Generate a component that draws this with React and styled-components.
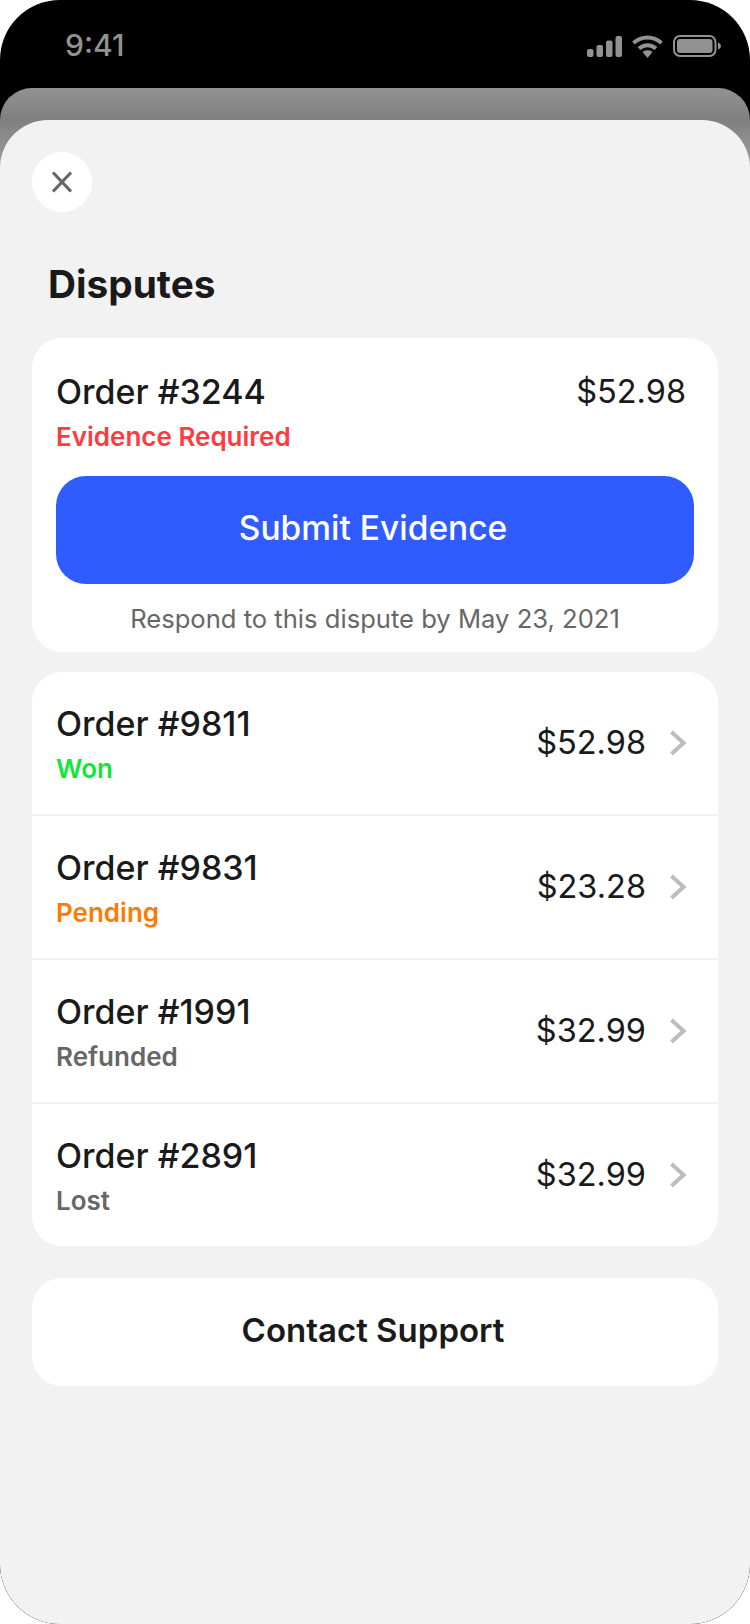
import React from 'react'
import styled, { createGlobalStyle } from 'styled-components'

const GlobalStyle = createGlobalStyle`
    html, body {
        margin: 0;
        padding: 0;
        background: #fff;
    }
    * {
        box-sizing: border-box;
    }
`

const orders = [
    { id: '9811', status: 'Won', color: '#0fe63c', amount: '$52.98' },
    { id: '9831', status: 'Pending', color: '#ff7a00', amount: '$23.28' },
    { id: '1991', status: 'Refunded', color: '#666666', amount: '$32.99' },
    { id: '2891', status: 'Lost', color: '#666666', amount: '$32.99' },
]

function StatusIcons() {
    return (
        <Icons>
            <svg width="35" height="21" viewBox="0 0 35 21" fill="#929292">
                <rect x="0" y="13" width="6.5" height="8" rx="2" />
                <rect x="9.5" y="9" width="6.5" height="12" rx="2" />
                <rect x="19" y="4.5" width="6.5" height="16.5" rx="2" />
                <rect x="28.5" y="0" width="6.5" height="21" rx="2" />
            </svg>
            <svg width="31" height="23" viewBox="0 0 31 23" fill="none" stroke="#929292" strokeWidth="4">
                <path d="M1.5 8C9.5 0.5 21.5 0.5 29.5 8" />
                <path d="M7 13.5C12 9 19 9 24 13.5" />
                <path d="M10.5 17L15.5 23L20.5 17C17.5 14.5 13.5 14.5 10.5 17Z" fill="#929292" stroke="none" />
            </svg>
            <svg width="48" height="22" viewBox="0 0 48 22" fill="none">
                <rect x="1" y="1" width="41.5" height="20" rx="6" stroke="#929292" strokeWidth="2" />
                <rect x="4" y="4" width="35.5" height="14" rx="3" fill="#929292" />
                <path d="M45 7.5C46.8 8.2 48 9.4 48 11C48 12.6 46.8 13.8 45 14.5Z" fill="#929292" />
            </svg>
        </Icons>
    )
}

function Chevron() {
    return (
        <svg width="16" height="26" viewBox="0 0 16 26" fill="none" stroke="#bdbdbd" strokeWidth="4">
            <path d="M1.5 2L13.5 13L1.5 24" />
        </svg>
    )
}

function App() {
    return (
        <Phone>
            <GlobalStyle />
            <StatusBar>
                <Clock>9:41</Clock>
                <StatusIcons />
            </StatusBar>
            <BackSheet>
                <Sheet>
                    <CloseButton aria-label="Close">
                        <svg width="24" height="24" viewBox="0 0 24 24" fill="none" stroke="#666" strokeWidth="3.2">
                            <path d="M3 2.5L21 21.5M21 2.5L3 21.5" />
                        </svg>
                    </CloseButton>
                    <Title>Disputes</Title>
                    <Card>
                        <TopRow>
                            <div>
                                <OrderName>Order #3244</OrderName>
                                <Status color="#ff3b3f">Evidence Required</Status>
                            </div>
                            <Amount>$52.98</Amount>
                        </TopRow>
                        <SubmitButton>Submit Evidence</SubmitButton>
                        <Deadline>Respond to this dispute by May 23, 2021</Deadline>
                    </Card>
                    <ListCard>
                        {orders.map((order) => (
                            <OrderRow key={order.id}>
                                <div>
                                    <OrderName>Order #{order.id}</OrderName>
                                    <Status color={order.color}>{order.status}</Status>
                                </div>
                                <RowEnd>
                                    <Amount>{order.amount}</Amount>
                                    <Chevron />
                                </RowEnd>
                            </OrderRow>
                        ))}
                    </ListCard>
                    <SupportButton>Contact Support</SupportButton>
                </Sheet>
            </BackSheet>
        </Phone>
    )
}

export default App

const Phone = styled.div`
    width: 750px;
    height: 1624px;
    background: #000;
    border-radius: 60px;
    overflow: hidden;
    display: flex;
    flex-direction: column;
    font-family: Inter, "Liberation Sans", sans-serif;
`

const StatusBar = styled.div`
    height: 88px;
    flex-shrink: 0;
    padding: 0 29px 0 65px;
    display: flex;
    justify-content: space-between;
    align-items: flex-start;
`

const Clock = styled.div`
    margin-top: 25px;
    font-size: 30px;
    line-height: 40px;
    font-weight: 500;
    color: #929292;
`

const Icons = styled.div`
    margin-top: 34px;
    height: 24px;
    display: flex;
    align-items: center;
    gap: 10px;
`

const BackSheet = styled.div`
    flex: 1;
    padding-top: 32px;
    border-radius: 32px 32px 0 0;
    background: linear-gradient(#929292, #808080 32px, #a0a0a0 80px);
    display: flex;
    flex-direction: column;
`

const Sheet = styled.div`
    flex: 1;
    padding: 32px 32px 0;
    background: #f2f2f2;
    border-radius: 48px 48px 60px 60px;
`

const CloseButton = styled.button`
    width: 60px;
    height: 60px;
    padding: 0;
    border: none;
    border-radius: 50%;
    background: #fff;
    display: flex;
    align-items: center;
    justify-content: center;
`

const Title = styled.h1`
    margin: 50px 0 0 16px;
    height: 44px;
    font-size: 38.8px;
    line-height: 44px;
    font-weight: 700;
    color: #1a1a1a;
`

const Card = styled.div`
    margin-top: 32px;
    padding: 34px 24px 0;
    height: 314px;
    background: #fff;
    border-radius: 30px;
`

const TopRow = styled.div`
    display: flex;
    justify-content: space-between;
    align-items: flex-start;
    padding-right: 8px;
`

const OrderName = styled.div`
    font-size: 34px;
    line-height: 40px;
    font-weight: 500;
    color: #1a1a1a;
`

const Status = styled.div`
    margin-top: 7px;
    font-size: 26px;
    line-height: 36px;
    font-weight: 600;
    color: ${(props) => props.color};
`

const Amount = styled.div`
    font-size: 32.5px;
    line-height: 40px;
    color: #1a1a1a;
`

const SubmitButton = styled.button`
    display: block;
    width: 100%;
    height: 108px;
    margin-top: 21px;
    padding: 0 4px 4px 0;
    border: none;
    border-radius: 30px;
    background: #2f5bff;
    color: #fff;
    font-family: inherit;
    font-size: 33.5px;
    font-weight: 500;
`

const Deadline = styled.div`
    margin-top: 19px;
    font-size: 25.6px;
    line-height: 32px;
    text-align: center;
    color: #666;
`

const ListCard = styled.div`
    margin-top: 20px;
    background: #fff;
    border-radius: 30px;
    overflow: hidden;
`

const OrderRow = styled.div`
    height: 144px;
    padding: 32px 32px 0 24px;
    display: flex;
    justify-content: space-between;
    align-items: flex-start;
    border-top: 2px solid #f2f2f2;

    &:first-child {
        height: 142px;
        border-top: none;
    }
`

const RowEnd = styled.div`
    margin-top: 19px;
    display: flex;
    align-items: center;
    gap: 24px;
`

const SupportButton = styled.button`
    display: block;
    width: 100%;
    height: 108px;
    margin-top: 32px;
    padding: 0 4px 4px 0;
    border: none;
    border-radius: 30px;
    background: #fff;
    color: #1a1a1a;
    font-family: inherit;
    font-size: 33px;
    font-weight: 600;
`
